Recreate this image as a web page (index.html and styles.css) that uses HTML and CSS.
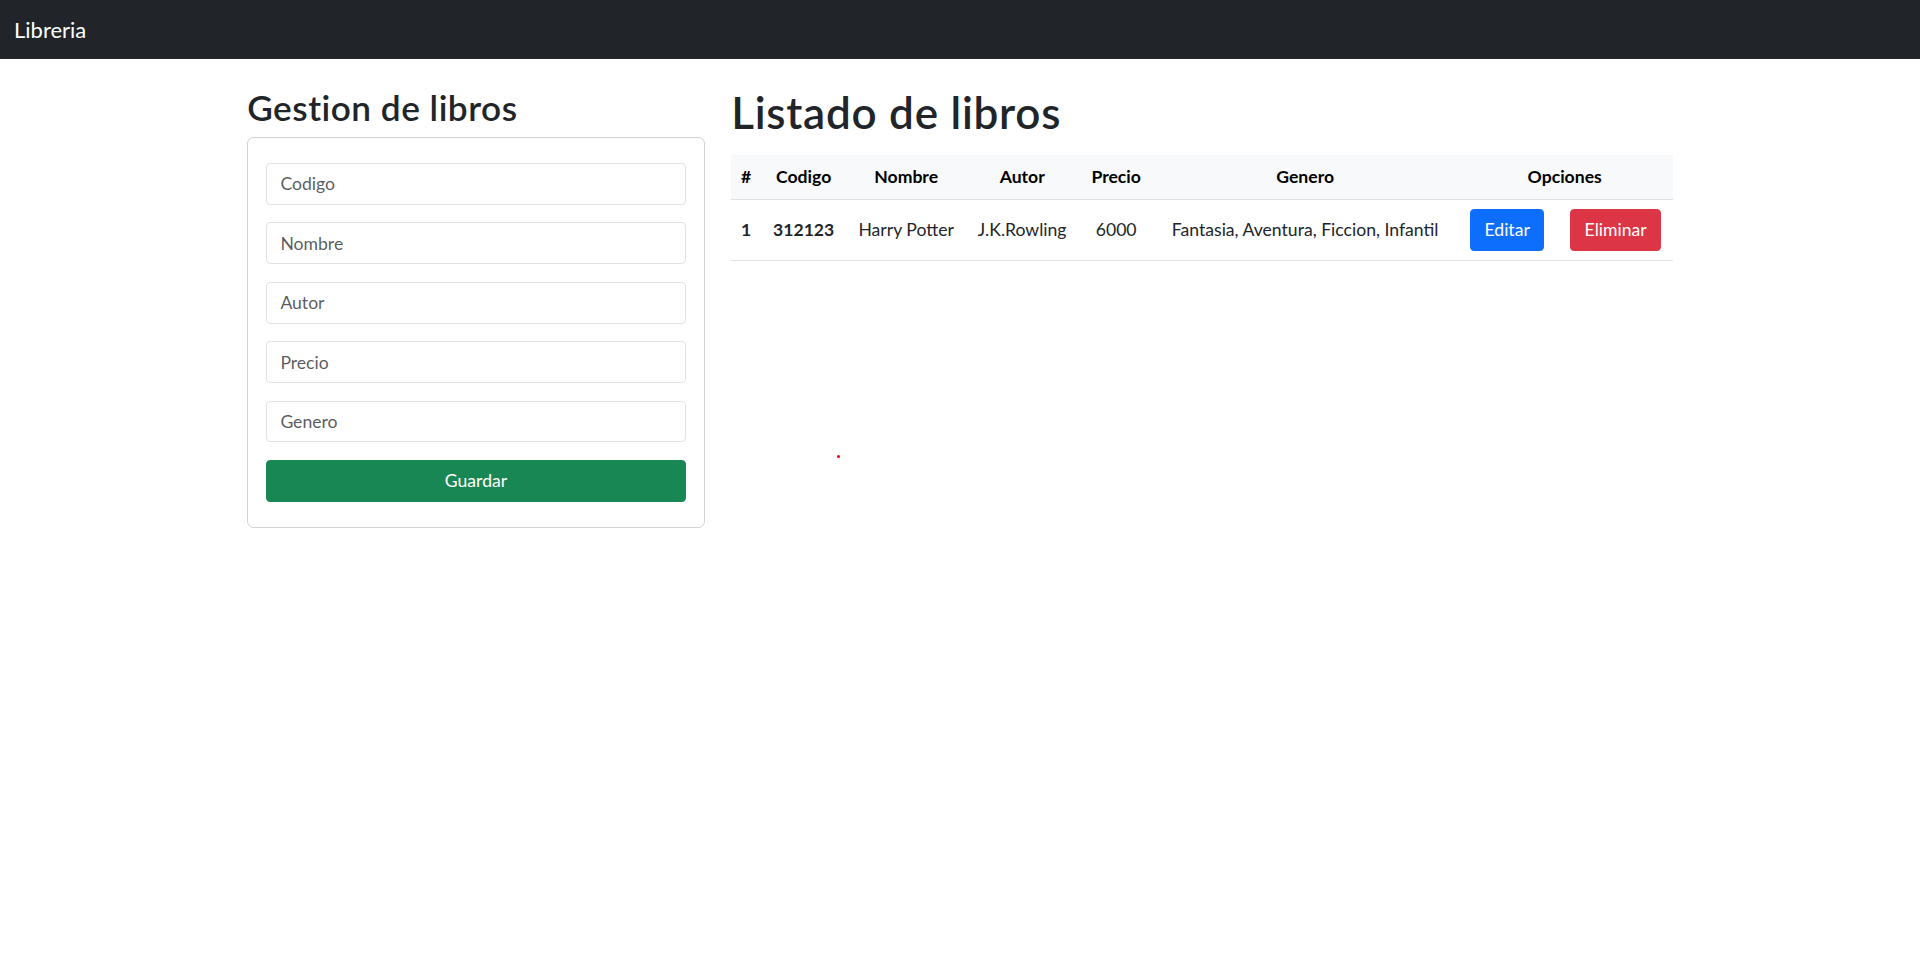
FILE: index.html
```html
<!DOCTYPE html>
<html lang="es">
<head>
<meta charset="utf-8">
<title>Libreria</title>
<link rel="stylesheet" href="styles.css">
</head>
<body>
<nav class="navbar">
  <span class="brand">Libreria</span>
</nav>
<main class="container">
  <section class="col-left">
    <h2 class="h2">Gestion de libros</h2>
    <div class="card">
      <form class="form">
        <input class="form-control" type="text" placeholder="Codigo">
        <input class="form-control" type="text" placeholder="Nombre">
        <input class="form-control" type="text" placeholder="Autor">
        <input class="form-control" type="text" placeholder="Precio">
        <input class="form-control" type="text" placeholder="Genero">
        <button class="btn btn-success btn-block" type="button">Guardar</button>
      </form>
    </div>
  </section>
  <section class="col-right">
    <h1 class="h1">Listado de libros</h1>
    <table class="table">
      <colgroup>
        <col class="c-num"><col class="c-cod"><col class="c-nom"><col class="c-aut"><col class="c-pre"><col class="c-gen"><col class="c-ed"><col class="c-el">
      </colgroup>
      <thead>
        <tr>
          <th>#</th>
          <th>Codigo</th>
          <th>Nombre</th>
          <th>Autor</th>
          <th>Precio</th>
          <th>Genero</th>
          <th colspan="2">Opciones</th>
        </tr>
      </thead>
      <tbody>
        <tr>
          <th>1</th>
          <td class="bold">312123</td>
          <td>Harry Potter</td>
          <td>J.K.Rowling</td>
          <td>6000</td>
          <td>Fantasia, Aventura, Ficcion, Infantil</td>
          <td><button class="btn btn-primary" type="button">Editar</button></td>
          <td><button class="btn btn-danger" type="button">Eliminar</button></td>
        </tr>
      </tbody>
    </table>
  </section>
  <span class="dot"></span>
</main>
</body>
</html>
```

FILE: styles.css
```css
* { box-sizing: border-box; }
html, body { margin: 0; padding: 0; }
body {
  font-family: "Lato", "Open Sans", "Liberation Sans", sans-serif;
  font-size: 17.6px;
  line-height: 1.5;
  color: #212529;
  background: #fff;
}
.navbar {
  background: #212529;
  height: 59px;
  display: flex;
  align-items: center;
  padding: 0 13px 0 14px;
}
.brand {
  color: #fff;
  font-size: 22px;
  line-height: 33px;
}
.container {
  position: relative;
  width: 1452px;
  margin: 0 auto;
  padding: 27px 13.2px 0;
  display: flex;
  gap: 26.4px;
}
.col-left { width: 457.6px; flex: none; }
.col-right { flex: 1; min-width: 0; }
.h2 {
  margin: 0 0 8.8px;
  font-size: 35.2px;
  font-weight: 600;
  line-height: 1.2;
  letter-spacing: 0.5px;
}
.h1 {
  margin: 0 0 16.5px;
  font-size: 44px;
  font-weight: 600;
  line-height: 1.2;
  letter-spacing: 0.75px;
}
.card {
  border: 1px solid rgba(0,0,0,0.175);
  border-radius: 6.6px;
  padding: 25px 18px;
}
.form { display: flex; flex-direction: column; gap: 17.6px; }
.form-control {
  display: block;
  width: 100%;
  height: 41.8px;
  padding: 6.6px 13.2px;
  font-family: inherit;
  font-size: 17.6px;
  color: #212529;
  border: 1px solid #dee2e6;
  border-radius: 4.1px;
  background: #fff;
  outline: none;
}
.form-control::placeholder { color: rgba(33,37,41,0.75); }
.btn {
  display: inline-block;
  font-family: inherit;
  font-size: 17.6px;
  line-height: 1.5;
  padding: 6.6px 13.2px;
  border: 1px solid transparent;
  border-radius: 4.1px;
  color: #fff;
  cursor: pointer;
  height: 41.8px;
}
.btn-block { width: 100%; }
.btn-success { background: #198754; border-color: #198754; }
.btn-primary { background: #0d6efd; border-color: #0d6efd; }
.btn-danger { background: #dc3545; border-color: #dc3545; }
.table {
  width: 100%;
  border-collapse: collapse;
  table-layout: fixed;
}
.c-num { width: 30px; }
.c-cod { width: 85px; }
.c-nom { width: 120px; }
.c-aut { width: 112px; }
.c-pre { width: 76px; }
.c-gen { width: 302px; }
.c-ed { width: 102px; }
.c-el { width: 115px; }
.table th, .table td {
  padding: 8.8px 0;
  text-align: center;
  vertical-align: middle;
  border-bottom: 1px solid #dee2e6;
  white-space: nowrap;
}
.table thead th {
  background: #f8f9fa;
  color: #000;
  font-weight: 700;
  line-height: 26.4px;
}
.table tbody th, .table .bold { font-weight: 700; }
.table tbody td, .table tbody th { color: #212529; }
.dot {
  position: absolute;
  left: 603px;
  top: 396px;
  width: 3px;
  height: 3px;
  border-radius: 50%;
  background: #e00;
}
```
